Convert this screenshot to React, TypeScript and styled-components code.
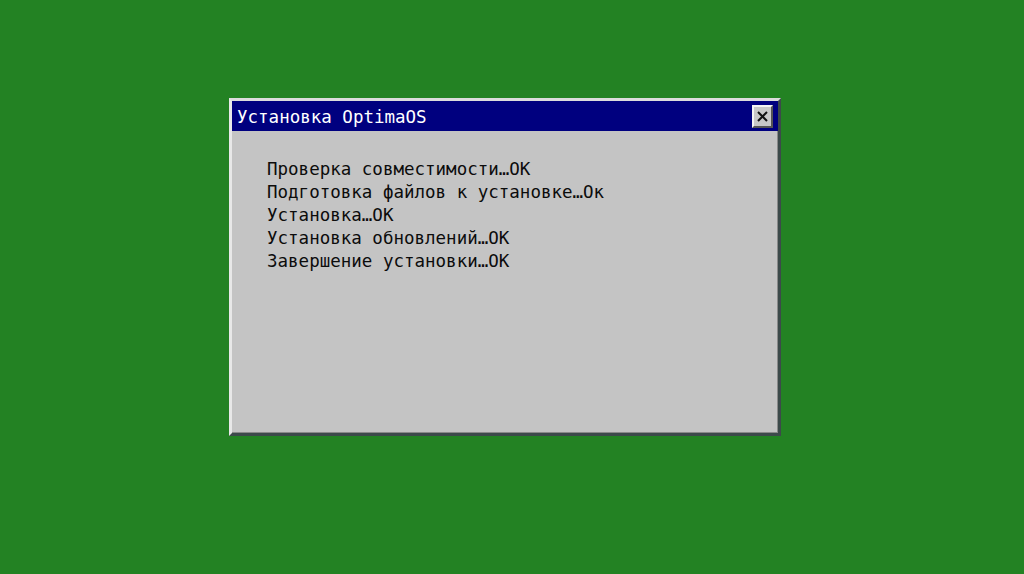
import React from "react";
import styled, { createGlobalStyle } from "styled-components";

const Global = createGlobalStyle`
  html, body { margin: 0; padding: 0; }
  body {
    background: #238223;
    width: 1024px;
    height: 574px;
    overflow: hidden;
    font-family: "DejaVu Sans Mono", "Liberation Mono", monospace;
  }
`;

const Desktop = styled.div`
  width: 1024px;
  height: 574px;
  box-sizing: border-box;
  padding: 98px 0 0 229px;
  background: #238223;
`;

const Window = styled.div`
  width: 552px;
  height: 338px;
  box-sizing: border-box;
  display: flex;
  flex-direction: column;
  background: #c4c4c4;
  border-style: solid;
  border-width: 3px;
  border-color: #dcdcdc #3c4a4a #3c4a4a #e8e8e8;
  box-shadow: inset -1px -1px 0 #8a8a8a;
`;

const TitleBar = styled.div`
  height: 30px;
  flex: none;
  display: flex;
  align-items: center;
  justify-content: space-between;
  background: #00007f;
  padding: 0 5px 0 5px;
`;

const Title = styled.span`
  color: #ffffff;
  font-family: "DejaVu Sans Mono", monospace;
  font-size: 17.5px;
  line-height: 30px;
  padding-top: 1px;
`;

const CloseButton = styled.div`
  width: 21px;
  height: 23px;
  box-sizing: border-box;
  display: flex;
  align-items: center;
  justify-content: center;
  background: #c8c8c8;
  border-style: solid;
  border-width: 2px;
  border-color: #f4f4f4 #555 #555 #f4f4f4;
`;

const Body = styled.div`
  flex: 1;
  padding: 27px 0 0 35px;
  display: flex;
  flex-direction: column;
`;

const Line = styled.div`
  color: #0c0c0c;
  font-family: "DejaVu Sans Mono", monospace;
  font-size: 17.5px;
  line-height: 23px;
  white-space: pre;
`;

const lines = [
  "Проверка совместимости…OK",
  "Подготовка файлов к установке…Ок",
  "Установка…OK",
  "Установка обновлений…OK",
  "Завершение установки…OK",
];

export default function App() {
  return (
    <>
      <Global />
      <Desktop>
        <Window>
          <TitleBar>
            <Title>Установка OptimaOS</Title>
            <CloseButton>
              <svg width="13" height="13" viewBox="0 0 13 13">
                <path d="M2 2 L11 11 M11 2 L2 11" stroke="#111" strokeWidth="2" fill="none" />
              </svg>
            </CloseButton>
          </TitleBar>
          <Body>
            {lines.map((l) => (
              <Line key={l}>{l}</Line>
            ))}
          </Body>
        </Window>
      </Desktop>
    </>
  );
}
